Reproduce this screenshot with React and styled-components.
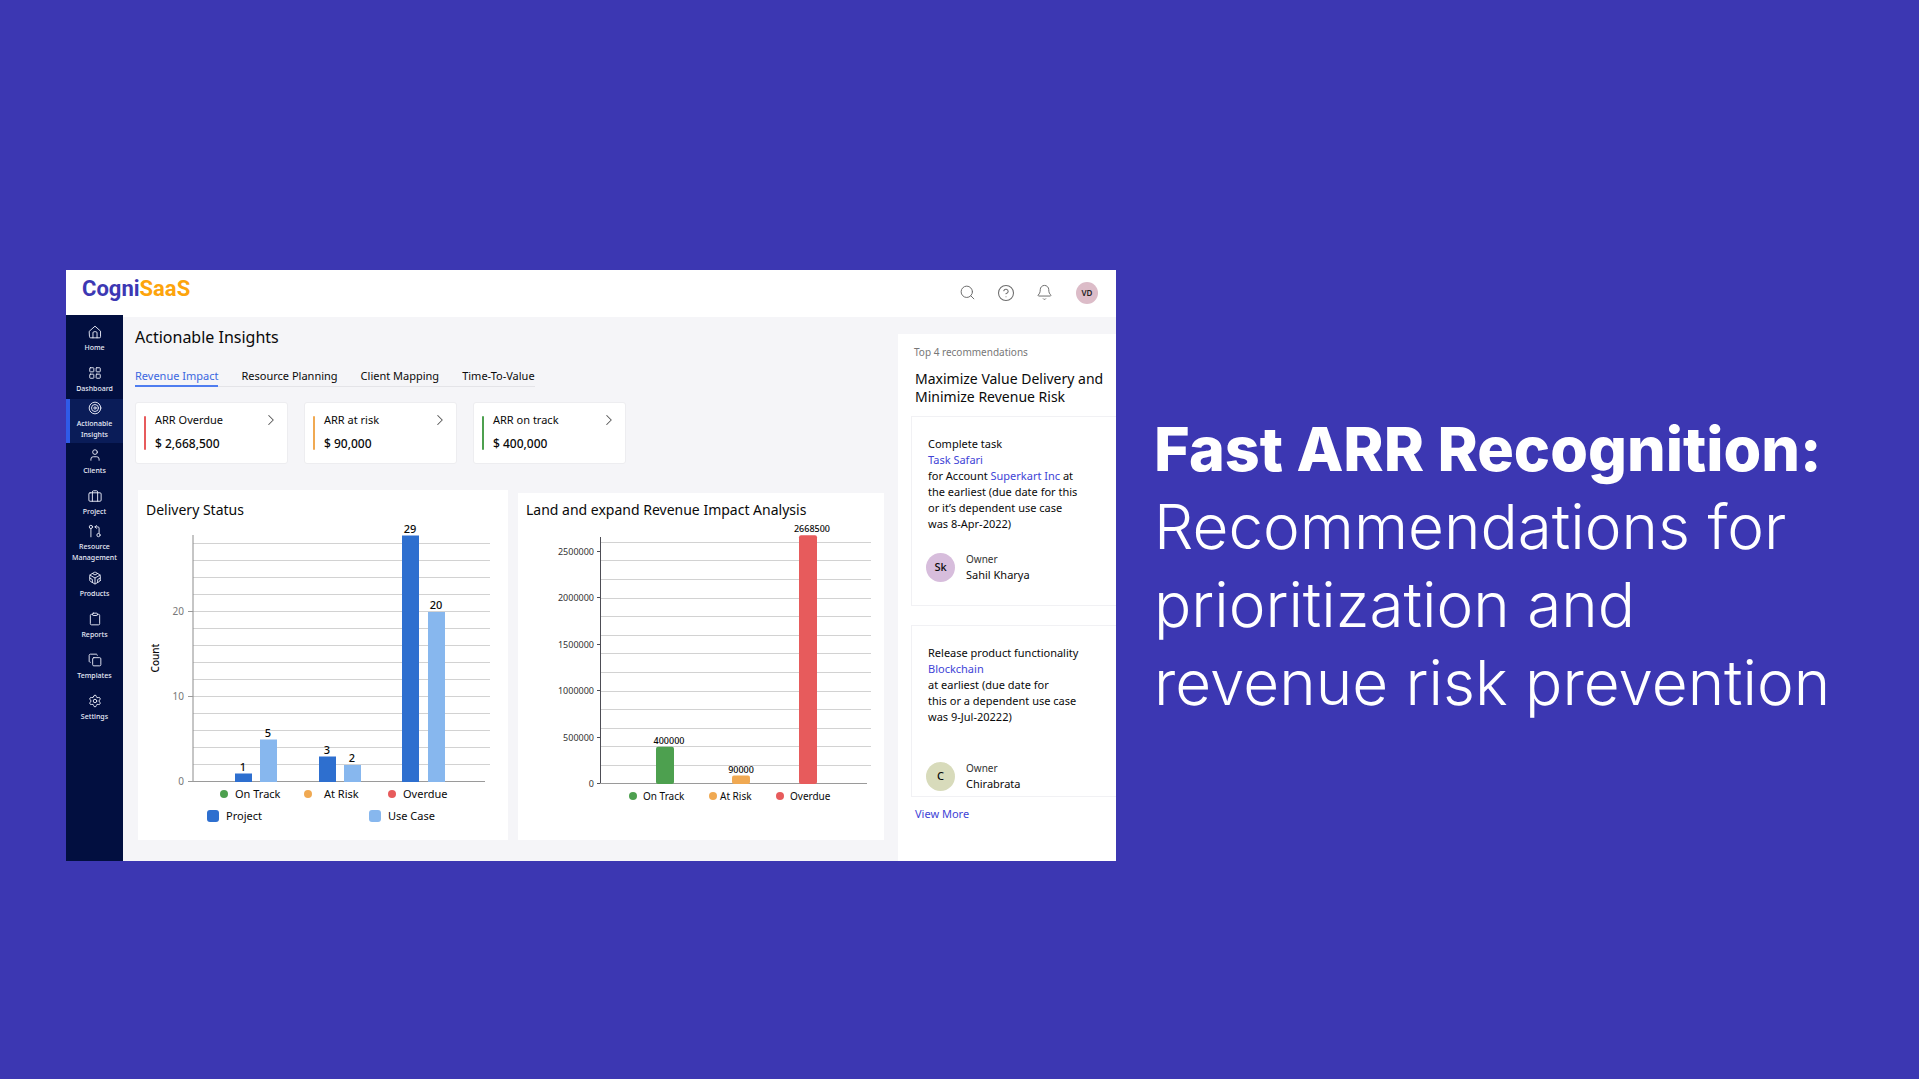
import React from 'react'
import styled, { createGlobalStyle } from 'styled-components'
import {
  House,
  LayoutGrid,
  Target,
  User,
  Clipboard,
  Copy,
  Settings,
  Search,
  Bell,
  ChevronRight
} from 'lucide-react'
import { FiCodesandbox, FiHelpCircle } from 'react-icons/fi'

const GlobalStyle = createGlobalStyle`
  * {
    box-sizing: border-box;
  }
  body {
    margin: 0;
    background: #3c37b2;
    font-family: 'Noto Sans', sans-serif;
    color: #0a0a0a;
  }
  h1, h2, h3, p, ul, dl {
    margin: 0;
    padding: 0;
    font-weight: 400;
  }
  button {
    font: inherit;
    color: inherit;
    background: none;
    border: 0;
    padding: 0;
    cursor: pointer;
  }
  a {
    text-decoration: none;
  }
`

const Page = styled.main`
  display: grid;
  grid-template-columns: minmax(0, 1050fr) minmax(0, 701fr);
  gap: 38px;
  align-items: center;
  min-height: 100vh;
  padding: 52px 64px 0 66px;
`

const AppWindow = styled.section`
  background: #fff;
  overflow: hidden;
`

const Header = styled.header`
  display: flex;
  justify-content: space-between;
  height: 45px;
  padding: 0 18px 0 16px;
`

const Logo = styled.a`
  padding-top: 5px;
  font: 700 22px/28px Roboto, sans-serif;
  color: #3d38b3;
`

const LogoAccent = styled.span`
  color: #fda40c;
`

const HeaderActions = styled.div`
  display: flex;
  align-items: center;
  gap: 21px;
  color: #6d6d6d;
`

const IconButton = styled.button`
  display: flex;
`

const UserBadge = styled.button`
  width: 22px;
  height: 22px;
  margin-left: 2px;
  border-radius: 50%;
  background: #dcbcc8;
  color: #222;
  font-size: 8px;
  font-weight: 600;
`

const Body = styled.div`
  display: flex;
  align-items: stretch;
`

const Sidebar = styled.nav`
  flex: none;
  width: 57px;
  padding-top: 4px;
  background: #020f40;
`

const SidebarItem = styled.a`
  position: relative;
  display: flex;
  flex-direction: column;
  align-items: center;
  gap: 3px;
  height: 41px;
  padding-top: ${props => props.$double ? '0' : '6px'};
  color: #e9ecf8;
  font-size: 7px;
  font-weight: 500;
  line-height: 11px;
  text-align: center;

  ${props => props.$active && `
    &::before {
      content: '';
      position: absolute;
      inset: -2px 0 -1px;
      border-left: 4px solid #2f5be8;
      background: #0a1c58;
    }
  `}

  svg, span {
    position: relative;
  }
  svg {
    flex: none;
  }
`

const Main = styled.div`
  flex: 1;
  display: flex;
  min-width: 0;
  border-top: 2px solid #fff;
  background: #f5f5f8;
`

const Content = styled.div`
  flex: 1;
  min-width: 0;
  padding: 9px 14px 21px 12px;
`

const PageTitle = styled.h1`
  font-size: 16px;
  line-height: 22px;
`

const Tabs = styled.div`
  display: inline-flex;
  gap: 23px;
  margin-top: 20px;
  box-shadow: inset 0 -1px #e4e4e8;
`

const Tab = styled.button`
  padding-bottom: 1px;
  border-bottom: 2px solid ${props => props.$active ? '#4f7df0' : 'transparent'};
  color: ${props => props.$active ? '#3b67e0' : '#0a0a0a'};
  font-size: 11px;
  line-height: 16px;
  white-space: nowrap;
`

const StatRow = styled.div`
  display: flex;
  gap: 16px;
  margin-top: 15px;
`

const StatCard = styled.article`
  display: flex;
  align-items: flex-start;
  width: 153px;
  height: 62px;
  padding: 8px 10px 0 8px;
  border: 1px solid #ededf0;
  border-radius: 3px;
  background: #fff;
  font-size: 12px;
`

const StatMark = styled.span`
  width: 2px;
  height: 34px;
  margin: 5px 9px 0 0;
  border-radius: 1px;
  background: ${props => props.$color};
`

const StatText = styled.div`
  flex: 1;
  line-height: 18px;
`

const StatLabel = styled.h2`
  font-size: 11px;
`

const StatValue = styled.p`
  margin-top: 6px;
  font-weight: 500;
`

const StatLink = styled.button`
  display: flex;
  margin-top: 3px;
  color: #555;
`

const ChartRow = styled.div`
  display: flex;
  align-items: flex-end;
  gap: 10px;
  margin: 26px 0 0 3px;
`

const ChartCard = styled.article`
  flex: ${props => props.$grow} 1 0;
  min-width: 0;
  min-height: ${props => props.$short ? '347px' : '350px'};
  padding-top: ${props => props.$short ? '7px' : '10px'};
  background: #fff;

  svg {
    display: block;
    width: 100%;
  }
`

const ChartTitle = styled.h2`
  padding-left: 8px;
  font-size: 14px;
  line-height: 20px;
  white-space: nowrap;
`

const ChartText = styled.text`
  font-size: ${props => props.$size || 11}px;
  font-weight: ${props => props.$weight || 400};
  fill: ${props => props.$color || '#0a0a0a'};
`

const SeriesLegend = styled.ul`
  display: grid;
  grid-template-columns: 162px auto;
  padding: 4px 0 0 69px;
  list-style: none;
`

const SeriesItem = styled.li`
  display: flex;
  align-items: center;
  gap: 7px;
  font-size: 11px;
  line-height: 16px;

  &::before {
    content: '';
    width: 12px;
    height: 12px;
    border-radius: 3px;
    background: ${props => props.$color};
  }
`

const Panel = styled.aside`
  flex: none;
  width: 218px;
  margin-top: 17px;
  padding: 9px 0 0 13px;
  background: #fff;
`

const PanelHint = styled.p`
  padding-left: 3px;
  color: #777;
  font-size: 10px;
  line-height: 18px;
`

const PanelTitle = styled.h2`
  padding: 9px 0 0 4px;
  font-size: 14px;
  line-height: 18px;
  white-space: nowrap;
`

const TaskCard = styled.article`
  height: ${props => props.$height}px;
  margin: ${props => props.$first ? '10px' : '19px'} 0 0;
  padding: 19px 0 0 16px;
  border: solid #f1f1f4;
  border-width: 1px 0 1px 1px;
  font-size: 11px;
  font-weight: 500;
  line-height: 16px;
  white-space: nowrap;
`

const TaskLink = styled.a`
  color: #4143d6;
`

const Owner = styled.div`
  display: flex;
  gap: 11px;
  align-items: center;
  margin-top: ${props => props.$gap}px;
  margin-left: -2px;
`

const OwnerAvatar = styled.span`
  display: flex;
  align-items: center;
  justify-content: center;
  width: 29px;
  height: 29px;
  border-radius: 50%;
  background: ${props => props.$color};
`

const OwnerRole = styled.p`
  color: #333;
  font-size: 10px;
`

const ViewMore = styled.a`
  display: block;
  padding: 8px 0 0 4px;
  color: #4143d6;
  font-size: 11px;
  line-height: 18px;
`

const Pitch = styled.section`
  color: #fff;
  font-family: Inter, sans-serif;
  font-size: 62px;
  line-height: 78px;
  white-space: nowrap;

  p {
    font-weight: 300;
  }
`

const PitchTitle = styled.h2`
  font-size: 61px;
  font-weight: 800;
`

const LineIcon = ({ children }) => (
  <svg width="14" height="14" viewBox="0 0 24 24" fill="none" stroke="currentColor"
    strokeWidth="1.6" strokeLinecap="round" strokeLinejoin="round">
    {children}
  </svg>
)

const HomeIcon = () => (
  <LineIcon>
    <path d="M2.500 10.500 12 2l9.500 8.500V20a2 2 0 0 1-2 2h-15a2 2 0 0 1-2-2z" />
    <path d="M8.500 22v-8.500a2 2 0 0 1 2-2h3a2 2 0 0 1 2 2V22" />
  </LineIcon>
)

const SuitcaseIcon = () => (
  <LineIcon>
    <rect x="1.5" y="6.5" width="21" height="14.5" rx="2" />
    <path d="M7.5 21V5a2 2 0 0 1 2-2h5a2 2 0 0 1 2 2v16" />
  </LineIcon>
)

const ResourceIcon = () => (
  <LineIcon>
    <circle cx="5" cy="5" r="2.8" />
    <path d="M5 8v14M12 5h5a2 2 0 0 1 2 2v9" />
    <path d="M14.5 2.5 12 5l2.5 2.5" />
    <circle cx="18" cy="19" r="2.8" />
  </LineIcon>
)

const navItems = [
  { lines: ['Home'], icon: HomeIcon },
  { lines: ['Dashboard'], icon: LayoutGrid },
  { lines: ['Actionable', 'Insights'], icon: Target, active: true },
  { lines: ['Clients'], icon: User },
  { lines: ['Project'], icon: SuitcaseIcon },
  { lines: ['Resource', 'Management'], icon: ResourceIcon },
  { lines: ['Products'], icon: FiCodesandbox },
  { lines: ['Reports'], icon: Clipboard },
  { lines: ['Templates'], icon: Copy },
  { lines: ['Settings'], icon: Settings }
]

const tabs = ['Revenue Impact', 'Resource Planning', 'Client Mapping', 'Time-To-Value']

const GREEN = '#4da04f'
const ORANGE = '#f0a952'
const RED = '#e75b5c'
const BLUE = '#2e6fcf'
const LIGHT_BLUE = '#87b7ee'

const stats = [
  { label: 'ARR Overdue', value: '$ 2,668,500', color: RED },
  { label: 'ARR at risk', value: '$ 90,000', color: ORANGE },
  { label: 'ARR on track', value: '$ 400,000', color: GREEN }
]

const deliveryBars = [
  { x: 97, value: 1, color: BLUE },
  { x: 122, value: 5, color: LIGHT_BLUE },
  { x: 181, value: 3, color: BLUE },
  { x: 206, value: 2, color: LIGHT_BLUE },
  { x: 264, value: 29, color: BLUE },
  { x: 290, value: 20, color: LIGHT_BLUE }
]

const revenueBars = [
  { x: 138, value: 400000, color: GREEN, labelX: 151 },
  { x: 214, value: 90000, color: ORANGE, labelX: 223 },
  { x: 281, value: 2668500, color: RED, labelX: 294 }
]

const range = count => Array.from({ length: count }, (_, i) => i)

const Categories = ({ dots, labels, y, size }) => (
  <g>
    {['On Track', 'At Risk', 'Overdue'].map((name, i) => (
      <g key={name}>
        <circle cx={dots[i]} cy={y} r="4" fill={[GREEN, ORANGE, RED][i]} />
        <ChartText x={labels[i]} y={y + 4} $size={size}>{name}</ChartText>
      </g>
    ))}
  </g>
)

const DeliveryChart = () => (
  <svg viewBox="0 0 370 284" role="img" aria-label="Delivery Status">
    {range(14).map(i => (
      <path key={i} d={`M55 ${244 - i * 17}.5H352`} stroke="#d2d2d2" />
    ))}
    <path d="M55 15V262" stroke="#8c8c8c" />
    <path d="M50 261.5H347M50 176.5H55M50 91.5H55" stroke="#9a9a9a" />
    {[0, 10, 20].map(n => (
      <ChartText key={n} x="46" y={265 - n * 8.5} textAnchor="end" $size={10} $color="#777">{n}</ChartText>
    ))}
    <ChartText transform="translate(21 138) rotate(-90)" textAnchor="middle" $size={10} $weight={500}>Count</ChartText>
    {deliveryBars.map(({ x, value, color }) => (
      <g key={x}>
        <rect x={x} y={262 - value * 8.5} width="17" height={value * 8.5} fill={color} />
        <ChartText x={x + 8} y={259 - value * 8.5} textAnchor="middle" $weight={500}>{value}</ChartText>
      </g>
    ))}
    <Categories dots={[86, 170, 254]} labels={[97, 186, 265]} y={274} size={11} />
  </svg>
)

const RevenueChart = () => (
  <svg viewBox="0 0 366 284" role="img" aria-label="Land and expand Revenue Impact Analysis">
    {range(13).map(i => (
      <path key={i} d={`M82 ${Math.round(245 - i * 18.6)}.5H353`} stroke="#d2d2d2" />
    ))}
    <path d="M82.5 17V264" stroke="#4d4d55" />
    <path d="M79 263.5H349" stroke="#9a9a9a" />
    {range(6).map(i => (
      <g key={i}>
        <path d={`M79 ${Math.round(263 - i * 46.5)}.5H82`} stroke="#4d4d55" />
        <ChartText x="76" y={267 - i * 46.5} textAnchor="end" $size={9} $color="#333">{i * 500000}</ChartText>
      </g>
    ))}
    {revenueBars.map(({ x, value, color, labelX }) => (
      <g key={x}>
        <rect x={x} y={264 - value * 0.0000932} width="18" height={value * 0.0000932} rx="2" fill={color} />
        <ChartText x={labelX} y={261 - value * 0.0000932} textAnchor="middle" $size={9} $weight={500}>{value}</ChartText>
      </g>
    ))}
    <Categories dots={[115, 195, 262]} labels={[125, 202, 272]} y={276} size={10} />
  </svg>
)

const App = () => (
  <>
    <GlobalStyle />
    <Page>
      <AppWindow>
        <Header>
          <Logo href="#">Cogni<LogoAccent>SaaS</LogoAccent></Logo>
          <HeaderActions>
            <IconButton aria-label="Search"><Search size={17} strokeWidth={1.4} /></IconButton>
            <IconButton aria-label="Help"><FiHelpCircle size={18} strokeWidth={1.4} /></IconButton>
            <IconButton aria-label="Notifications"><Bell size={17} strokeWidth={1.4} /></IconButton>
            <UserBadge>VD</UserBadge>
          </HeaderActions>
        </Header>
        <Body>
          <Sidebar>
            {navItems.map(({ lines, icon: Icon, active }) => (
              <SidebarItem key={lines[0]} href="#" $active={active} $double={lines.length > 1}>
                <Icon size={14} strokeWidth={1.6} />
                <span>{lines[0]}{lines[1] && <><br />{lines[1]}</>}</span>
              </SidebarItem>
            ))}
          </Sidebar>
          <Main>
            <Content>
              <PageTitle>Actionable Insights</PageTitle>
              <Tabs>
                {tabs.map((tab, i) => <Tab key={tab} $active={i === 0}>{tab}</Tab>)}
              </Tabs>
              <StatRow>
                {stats.map(({ label, value, color }) => (
                  <StatCard key={label}>
                    <StatMark $color={color} />
                    <StatText>
                      <StatLabel>{label}</StatLabel>
                      <StatValue>{value}</StatValue>
                    </StatText>
                    <StatLink aria-label={label}>
                      <ChevronRight size={12} strokeWidth={1.4} viewBox="6 4 12 16" />
                    </StatLink>
                  </StatCard>
                ))}
              </StatRow>
              <ChartRow>
                <ChartCard $grow={370}>
                  <ChartTitle>Delivery Status</ChartTitle>
                  <DeliveryChart />
                  <SeriesLegend>
                    <SeriesItem $color={BLUE}>Project</SeriesItem>
                    <SeriesItem $color={LIGHT_BLUE}>Use Case</SeriesItem>
                  </SeriesLegend>
                </ChartCard>
                <ChartCard $grow={366} $short>
                  <ChartTitle>Land and expand Revenue Impact Analysis</ChartTitle>
                  <RevenueChart />
                </ChartCard>
              </ChartRow>
            </Content>
            <Panel>
              <PanelHint>Top 4 recommendations</PanelHint>
              <PanelTitle>Maximize Value Delivery and<br />Minimize Revenue Risk</PanelTitle>
              <TaskCard $height={190} $first>
                <p>
                  Complete task<br />
                  <TaskLink href="#">Task Safari</TaskLink><br />
                  for Account <TaskLink href="#">Superkart Inc</TaskLink> at<br />
                  the earliest (due date for this<br />
                  or it’s dependent use case<br />
                  was 8-Apr-2022)
                </p>
                <Owner $gap={19}>
                  <OwnerAvatar $color="#d7bddc">Sk</OwnerAvatar>
                  <div>
                    <OwnerRole>Owner</OwnerRole>
                    <p>Sahil Kharya</p>
                  </div>
                </Owner>
              </TaskCard>
              <TaskCard $height={172}>
                <p>
                  Release product functionality<br />
                  <TaskLink href="#">Blockchain</TaskLink><br />
                  at earliest (due date for<br />
                  this or a dependent use case<br />
                  was 9-Jul-20222)
                </p>
                <Owner $gap={35}>
                  <OwnerAvatar $color="#d8dbbb">C</OwnerAvatar>
                  <div>
                    <OwnerRole>Owner</OwnerRole>
                    <p>Chirabrata</p>
                  </div>
                </Owner>
              </TaskCard>
              <ViewMore href="#">View More</ViewMore>
            </Panel>
          </Main>
        </Body>
      </AppWindow>
      <Pitch>
        <PitchTitle>Fast ARR Recognition:</PitchTitle>
        <p>
          Recommendations for<br />
          prioritization and<br />
          revenue risk prevention
        </p>
      </Pitch>
    </Page>
  </>
)

export default App
